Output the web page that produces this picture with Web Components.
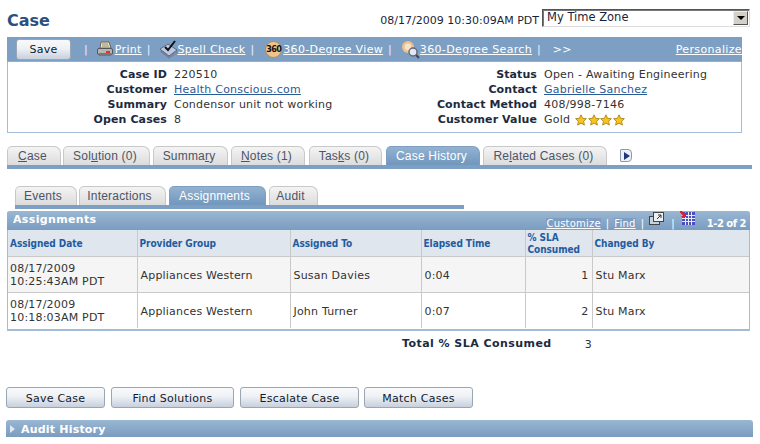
<!DOCTYPE html>
<html lang="en">
<head>
<meta charset="UTF-8">
<title>Case</title>
<style>
  html, body { margin: 0; height: 444px; overflow: hidden; background: #fff; }
  body { font: 11px "DejaVu Sans", Verdana, sans-serif; color: #333; }
</style>
</head>
<body>
<case-page></case-page>
<script>
const FONT = '"DejaVu Sans", Verdana, sans-serif';
const TABFONT = '"Liberation Sans", Arial, sans-serif';

const ICONS = {
  print: `<svg width="18" height="18" viewBox="0 0 18 18"><path d="M5 2h8l2 6H4z" fill="#f4e7b0" stroke="#666" stroke-width="1"/><path d="M6 4h6M6 6h7" stroke="#888"/><rect x="1.5" y="8.5" width="15" height="6" rx="1.5" fill="#b5b5b5" stroke="#555"/><rect x="3" y="13" width="12" height="3" fill="#777"/><rect x="10" y="11" width="4" height="2" fill="#d33"/></svg>`,
  spell: `<svg width="20" height="19" viewBox="0 0 20 19" style="margin-right:-2px"><path d="M1 9l8-5 9 6-8 6z" fill="#b9c9e6" stroke="#667" /><path d="M2 11l8 6 8-6v2l-8 5-8-6z" fill="#8ca0c8" stroke="#667" stroke-width=".6"/><path d="M6 7l3 3 7-9" fill="none" stroke="#111" stroke-width="2"/></svg>`,
  search: `<svg width="19" height="19" viewBox="0 0 19 19" style="margin:0 -1px 0 1px"><circle cx="7" cy="7" r="6" fill="#eec08a"/><circle cx="7" cy="7" r="3.4" fill="#f7e3c8"/><circle cx="12" cy="12" r="4" fill="#dfe9f3" stroke="#667" stroke-width="1.4"/><path d="M15 15l3 3" stroke="#445" stroke-width="2"/></svg>`,
  popup: `<svg width="15" height="13" viewBox="0 0 15 13"><rect x=".5" y="4.5" width="10" height="8" fill="#c9d3de" stroke="#444"/><rect x="4.5" y=".5" width="10" height="9" fill="#eef1f4" stroke="#444"/><path d="M8 7l4-4M9 3h3v3" fill="none" stroke="#333"/></svg>`,
  download: `<svg width="15" height="14" viewBox="0 0 15 14"><rect x="2" y="1" width="13" height="13" fill="#4a4fc0"/><path d="M2 4.5h13M2 7.5h13M2 10.5h13M5.500 1v13M8.500 1v13M11.500 1v13" stroke="#e8eaf6"/><path d="M0 0l5 4.500" stroke="#d8202a" stroke-width="2.400"/><path d="M6 1v5H1z" fill="#d8202a"/></svg>`,
  star: `<svg width="12.500" height="12" viewBox="0 0 12.500 12"><path d="M6 .8l1.600 3.500 3.800.4-2.800 2.600.8 3.800L6 9.200l-3.400 1.900.8-3.800L.6 4.700l3.800-.4z" fill="#f7c31c" stroke="#a07c10" stroke-width=".8"/></svg>`
};

class CaseHeader extends HTMLElement {
  constructor() {
    super();
    this.attachShadow({ mode: 'open' }).innerHTML = `
      <style>
        :host { display: flex; align-items: flex-end; box-sizing: border-box; height: 37px; padding: 9px 10px 10px 7px; font: 11px ${FONT}; color: #1a1f3a; }
        h1 { margin: 2px 0 0; font: bold 16px/19px ${FONT}; color: #2a4f80; flex: 1; align-self: flex-start; }
        .date { margin: 0 3px 0 0; line-height: 13px; }
        .sel { box-sizing: border-box; width: 208px; height: 18px; display: flex; justify-content: space-between;
          border: 1px solid; border-color: #555 #ddd #ddd #555; box-shadow: inset 1px 1px 0 #777; padding-left: 4px;
          font-size: 11.500px; line-height: 15px; color: #1a1f3a; background: #fff; }
        .arrow { width: 15px; height: 14px; margin: 1px; background: #d4d0c8; border: 1px solid; border-color: #eee #555 #555 #eee;
          box-sizing: border-box; display: flex; align-items: center; justify-content: center; }
        .arrow i { border: 4px solid transparent; border-top: 4px solid #000; border-bottom: 0; }
      </style>
      <h1>Case</h1>
      <span class="date">08/17/2009 10:30:09AM PDT</span>
      <div class="sel"><span>My Time Zone</span><span class="arrow"><i></i></span></div>`;
  }
}

class PsButton extends HTMLElement {
  constructor() {
    super();
    this.attachShadow({ mode: 'open' }).innerHTML = `
      <style>
        :host { display: inline-flex; box-sizing: border-box; height: 21px; padding-top: 1px; align-items: center; justify-content: center;
          border: 1px solid #9aa6b4; border-radius: 3px; font: 11px ${FONT}; color: #111a2c; letter-spacing: .25px;
          background: linear-gradient(#f8f9fb 0, #eef1f5 45%, #c7d0dd 100%); white-space: nowrap; }
      </style><slot></slot>`;
  }
}

class CaseToolbar extends HTMLElement {
  constructor() {
    super();
    const sep = '<span class="sep">|</span>';
    this.attachShadow({ mode: 'open' }).innerHTML = `
      <style>
        :host { display: flex; align-items: center; box-sizing: border-box; width: 735px; height: 25px; margin: 0 0 0 7px;
          padding-left: 9px; background: #7d9fc3; font: 11px ${FONT}; color: #fff; border-bottom: 1px solid #8fb0d0; }
        ps-button { width: 55px; }
        a { color: #fff; text-decoration: underline; letter-spacing: .35px; margin-left: 1px; }
        .sep { margin: 0 8px 0 5px; color: #eef; }
        .it { display: inline-flex; align-items: center; }
        svg { display: block; flex: none; }
        .n360 { box-sizing: border-box; width: 17px; height: 17px; border-radius: 50%; background: #f0c38a; border: 1px solid #b58a52;
          font: bold 9px/15px "DejaVu Sans Condensed", ${FONT}; color: #111; text-align: center; letter-spacing: -.6px; margin-left: 3px; flex: none; }
        .more { margin-left: 4px; letter-spacing: .35px; }
        a.pers { margin-left: auto; margin-right: 0; }
      </style>
      <ps-button>Save</ps-button>
      <span class="sep" style="margin-left:13px">|</span>
      <span class="it">${ICONS.print}<a>Print</a></span>${sep}
      <span class="it">${ICONS.spell}<a>Spell Check</a></span>${sep}
      <span class="it"><span class="n360">360</span><a>360-Degree View</a></span>${sep}
      <span class="it">${ICONS.search}<a>360-Degree Search</a></span>${sep}
      <span class="more">&gt;&gt;</span>
      <a class="pers">Personalize</a>`;
  }
}

class CaseSummary extends HTMLElement {
  constructor() {
    super();
    const row = (k, v) => `<b>${k}</b><span>${v}</span>`;
    const stars = ICONS.star.repeat(4);
    this.attachShadow({ mode: 'open' }).innerHTML = `
      <style>
        :host { display: grid; grid-template-columns: 371px 1fr; box-sizing: border-box; width: 735px; height: 71px; margin-left: 7px;
          padding: 5px 0 0; border: 1px solid #a3bdd8; border-top: 0; font: 11px/15px ${FONT}; color: #333; letter-spacing: .23px; }
        .g { display: grid; column-gap: 7px; grid-auto-rows: 15px; }
        .a { grid-template-columns: 159px 1fr; }
        .b { grid-template-columns: 150px 1fr; margin-left: 8px; }
        b { text-align: right; color: #1c2a40; white-space: nowrap; letter-spacing: .1px; }
        span { white-space: nowrap; display: flex; align-items: center; }
        a { color: #2a5a96; text-decoration: underline; }
        svg { display: block; }
        .s { margin-left: 5px; display: inline-flex; gap: 0; }
      </style>
      <div class="g a">
        ${row('Case ID', '220510')}
        ${row('Customer', '<a>Health Conscious.com</a>')}
        ${row('Summary', 'Condensor unit not working')}
        ${row('Open Cases', '8')}
      </div>
      <div class="g b">
        ${row('Status', 'Open - Awaiting Engineering')}
        ${row('Contact', '<a>Gabrielle Sanchez</a>')}
        ${row('Contact Method', '408/998-7146')}
        ${row('Customer Value', `Gold<span class="s">${stars}</span>`)}
      </div>`;
  }
}

class PsTab extends HTMLElement {
  constructor() {
    super();
    this.attachShadow({ mode: 'open' }).innerHTML = `
      <style>
        :host { display: flex; align-items: center; justify-content: center; box-sizing: border-box; height: 19px; flex: none; padding-right: var(--tab-shift, 3px);
          border: 1px solid #c8c8c8; border-bottom: 0; border-radius: 5px 7px 0 0; margin-right: 2px; letter-spacing: .2px;
          background: linear-gradient(#f4f4f4, #dcdcdc); font: 12px ${TABFONT}; color: #4a5568; white-space: nowrap; }
        :host([active]) { background: linear-gradient(#93b2d0, #7097bd); color: #fff; border-color: #7f9fc2; }
      </style><slot></slot>`;
  }
  connectedCallback() {
    if (this.getAttribute('w')) this.style.width = this.getAttribute('w') + 'px';
    if (this.getAttribute('gap')) this.style.marginRight = this.getAttribute('gap') + 'px';
  }
}

class PsTabs extends HTMLElement {
  constructor() {
    super();
    this.attachShadow({ mode: 'open' }).innerHTML = `
      <style>
        :host { display: flex; align-items: flex-end; box-sizing: border-box; border-bottom: 4px solid #7d9fc3; }
      </style><slot></slot>`;
  }
}

class AssignGrid extends HTMLElement {
  constructor() {
    super();
    const rows = [
      ['08/17/2009<br>10:25:43AM PDT', 'Appliances Western', 'Susan Davies', '0:04', '1', 'Stu Marx'],
      ['08/17/2009<br>10:18:03AM PDT', 'Appliances Western', 'John Turner', '0:07', '2', 'Stu Marx']
    ];
    this.attachShadow({ mode: 'open' }).innerHTML = `
      <style>
        :host { display: block; box-sizing: border-box; width: 743px; height: 120px; margin-left: 7px; font: 11px ${FONT}; color: #333; letter-spacing: .2px;
          border: 1px solid #a3bdd8; border-top: 0; border-bottom-width: 2px; border-radius: 3px 3px 0 0; }
        .bar { display: flex; align-items: flex-end; height: 19px; box-sizing: border-box; margin: 0 -1px; padding: 0 4px 0 6px;
          background: linear-gradient(#9ab7d2, #7a9cc0); border-radius: 3px 3px 0 0; color: #fff; font-size: 10px; line-height: 12px; }
        .bar b.t { font-size: 11px; margin-right: auto; line-height: 15px; align-self: center; letter-spacing: .35px; position: relative; top: -1px; }
        .bar a { text-decoration: underline; background: #7e9dc3; }
        .bar .s { margin: 0 5px; }
        .bar svg { display: block; margin-bottom: 5px; }
        .bar b.c { margin-left: 12px; letter-spacing: -.5px; }
        table { border-collapse: collapse; table-layout: fixed; width: 741px; }
        th, td { border: 1px solid #c9c9c9; padding: 1px 0 0 3px; }
        th, td:first-child { padding-left: 2px; }
        tr > :first-child { border-left: 0; }
        tr > :last-child { border-right: 0; }
        tr:last-child td { border-bottom: 0; }
        th { height: 25px; background: #dfe6ee; color: #1f5ba0; font: bold 10px/12px "DejaVu Sans Condensed", ${FONT}; letter-spacing: -.05px; text-align: left; border-top: 0; }
        td { height: 34px; line-height: 13px; background: #fff; }
        tr.alt td { background: #f5f5f5; }
        td.r { text-align: right; padding-right: 3px; }
      </style>
      <div class="bar">
        <b class="t">Assignments</b>
        <a>Customize</a><span class="s">|</span><a>Find</a><span class="s">|</span>${ICONS.popup}<span class="s" style="margin-left:7px">|</span>${ICONS.download}<b class="c">1-2 of 2</b>
      </div>
      <table>
        <colgroup><col style="width:129px"><col style="width:153px"><col style="width:131px"><col style="width:104px"><col style="width:67px"><col></colgroup>
        <tr><th>Assigned Date</th><th>Provider Group</th><th>Assigned To</th><th>Elapsed Time</th><th>% SLA Consumed</th><th>Changed By</th></tr>
        ${rows.map((r, i) => `<tr class="${i === 0 ? 'alt' : ''}"><td>${r[0]}</td><td>${r[1]}</td><td>${r[2]}</td><td>${r[3]}</td><td class="r">${r[4]}</td><td>${r[5]}</td></tr>`).join('')}
      </table>`;
  }
}

class AuditBar extends HTMLElement {
  constructor() {
    super();
    this.attachShadow({ mode: 'open' }).innerHTML = `
      <style>
        :host { display: flex; align-items: center; box-sizing: border-box; width: 747px; height: 17px; margin-left: 6px; padding: 1px 0 0 4px;
          background: linear-gradient(#9ab7d2, #7a9cc0); border-radius: 3px 3px 0 0; color: #fff; font: bold 11px ${FONT}; letter-spacing: .2px; }
        i { border: 4px solid transparent; border-left: 5px solid #dfe8f1; border-right: 0; margin-right: 6px; }
      </style><i></i><slot></slot>`;
  }
}

class CasePage extends HTMLElement {
  constructor() {
    super();
    this.attachShadow({ mode: 'open' }).innerHTML = `
      <style>
        :host { display: block; width: 760px; height: 444px; overflow: hidden; font: 11px ${FONT}; color: #333; }
        .tabs1 { margin: 13px 0 0 7px; width: 745px; }
        .tabs2 { margin: 17px 0 0 15px; width: 449px; --tab-shift: 6px; }
        assign-grid { margin-top: 2px; }
        .next { margin: 0 0 3px 13px; width: 12px; height: 13px; box-sizing: border-box; border: 1px solid #8a9cb5; border-radius: 1px 4px 4px 1px;
          display: flex; align-items: center; justify-content: center; background: #eef2f7; }
        .next i { border: 4px solid transparent; border-left: 6px solid #20387a; border-right: 0; margin-left: 2px; }
        .total { display: flex; margin: 5px 0 0 402px; font: bold 11px/15px ${FONT}; color: #1c2a40; letter-spacing: .45px; }
        .total span { font-weight: normal; margin-left: 33px; color: #333; position: relative; top: 1px; }
        .btns { display: flex; gap: 6px; margin: 36px 0 0 6px; }
        audit-bar { margin-top: 12px; }
      </style>
      <case-header></case-header>
      <case-toolbar></case-toolbar>
      <case-summary></case-summary>
      <ps-tabs class="tabs1">
        <ps-tab w="54" gap="2"><u>C</u>ase</ps-tab>
        <ps-tab w="87" gap="3">Sol<u>u</u>tion (0)</ps-tab>
        <ps-tab w="75" gap="3">Summa<u>r</u>y</ps-tab>
        <ps-tab w="74" gap="4"><u>N</u>otes (1)</ps-tab>
        <ps-tab w="73" gap="4">Tas<u>k</u>s (0)</ps-tab>
        <ps-tab w="94" gap="3" active>Case History</ps-tab>
        <ps-tab w="124" gap="0">Re<u>l</u>ated Cases (0)</ps-tab>
        <span class="next"><i></i></span>
      </ps-tabs>
      <ps-tabs class="tabs2">
        <ps-tab w="62" gap="2">Events</ps-tab>
        <ps-tab w="87" gap="3">Interactions</ps-tab>
        <ps-tab w="97" gap="3" active>Assignments</ps-tab>
        <ps-tab w="49" gap="0">Audit</ps-tab>
      </ps-tabs>
      <assign-grid></assign-grid>
      <div class="total">Total % SLA Consumed<span>3</span></div>
      <div class="btns">
        <ps-button style="width:99px">Save Case</ps-button>
        <ps-button style="width:123px">Find Solutions</ps-button>
        <ps-button style="width:119px">Escalate Case</ps-button>
        <ps-button style="width:109px;margin-left:-1px">Match Cases</ps-button>
      </div>
      <audit-bar>Audit History</audit-bar>`;
  }
}

customElements.define('case-header', CaseHeader);
customElements.define('ps-button', PsButton);
customElements.define('case-toolbar', CaseToolbar);
customElements.define('case-summary', CaseSummary);
customElements.define('ps-tab', PsTab);
customElements.define('ps-tabs', PsTabs);
customElements.define('assign-grid', AssignGrid);
customElements.define('audit-bar', AuditBar);
customElements.define('case-page', CasePage);
</script>
</body>
</html>
